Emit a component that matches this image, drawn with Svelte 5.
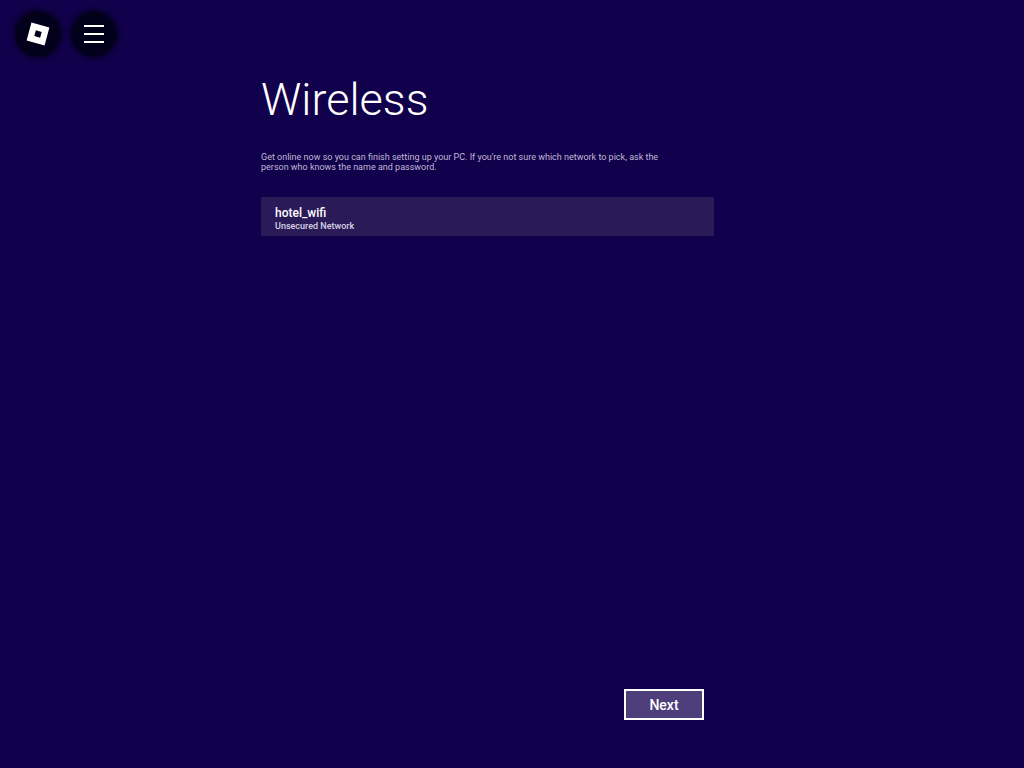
<script>
  let networks = [{ name: "hotel_wifi", detail: "Unsecured Network" }];
</script>

<div class="page">
  <div class="topbar">
    <button class="round" aria-label="Roblox">
      <svg width="26" height="26" viewBox="0 0 26 26">
        <path fill="#fff" fill-rule="evenodd" d="M6.43 1.61 24.39 6.43 19.57 24.39 1.61 19.57 Z M10.88 9.32 9.32 15.12 15.12 16.68 16.68 10.88 Z"/>
      </svg>
    </button>
    <button class="round" aria-label="Menu">
      <span class="bar"></span>
      <span class="bar"></span>
      <span class="bar"></span>
    </button>
  </div>

  <main class="content">
    <h1>Wireless</h1>
    <p class="intro">Get online now so you can finish setting up your PC. If you're not sure which network to pick, ask the person who knows the name and password.</p>
    {#each networks as net}
      <div class="network">
        <div class="name">{net.name}</div>
        <div class="detail">{net.detail}</div>
      </div>
    {/each}
  </main>

  <div class="footer">
    <button class="next">Next</button>
  </div>
</div>

<style>
  :global(body) {
    background: #11004b;
    font-family: Roboto, "Liberation Sans", sans-serif;
  }

  .page {
    height: 768px;
    box-sizing: border-box;
    display: flex;
    flex-direction: column;
    overflow: hidden;
    color: #fff;
  }

  .topbar {
    display: flex;
    gap: 12px;
    padding: 12px 0 0 16px;
    height: 44px;
  }

  .round {
    width: 44px;
    height: 44px;
    padding: 0;
    border: 0;
    border-radius: 50%;
    background: #03001c;
    box-shadow: 0 0 5px 2px #03001c;
    display: flex;
    flex-direction: column;
    align-items: center;
    justify-content: center;
    gap: 6.5px;
  }

  .bar {
    width: 20px;
    height: 1.5px;
    background: #fff;
  }

  .content {
    margin-left: 261px;
    width: 453px;
    flex: 1;
  }

  h1 {
    margin: 17px 0 0;
    font-size: 45px;
    font-weight: 300;
    line-height: 54px;
    color: #fff;
  }

  .intro {
    margin: 25px 0 0;
    width: 400px;
    font-size: 9px;
    line-height: 10px;
    color: #c0b9d6;
  }

  .network {
    margin-top: 25px;
    height: 39px;
    box-sizing: border-box;
    padding: 9px 14px 0;
    background: #2a1a58;
    border-radius: 1px;
  }

  .name {
    font-size: 12px;
    font-weight: 500;
    line-height: 15px;
  }

  .detail {
    font-size: 9px;
    font-weight: 500;
    line-height: 11px;
    color: #d8d2e6;
  }

  .footer {
    display: flex;
    justify-content: flex-end;
    padding: 0 320px 48px 0;
  }

  .next {
    width: 80px;
    height: 31px;
    box-sizing: border-box;
    border: 2px solid #fff;
    background: #4e3f7c;
    color: #fff;
    font-family: inherit;
    font-size: 14px;
    font-weight: 500;
  }
</style>
